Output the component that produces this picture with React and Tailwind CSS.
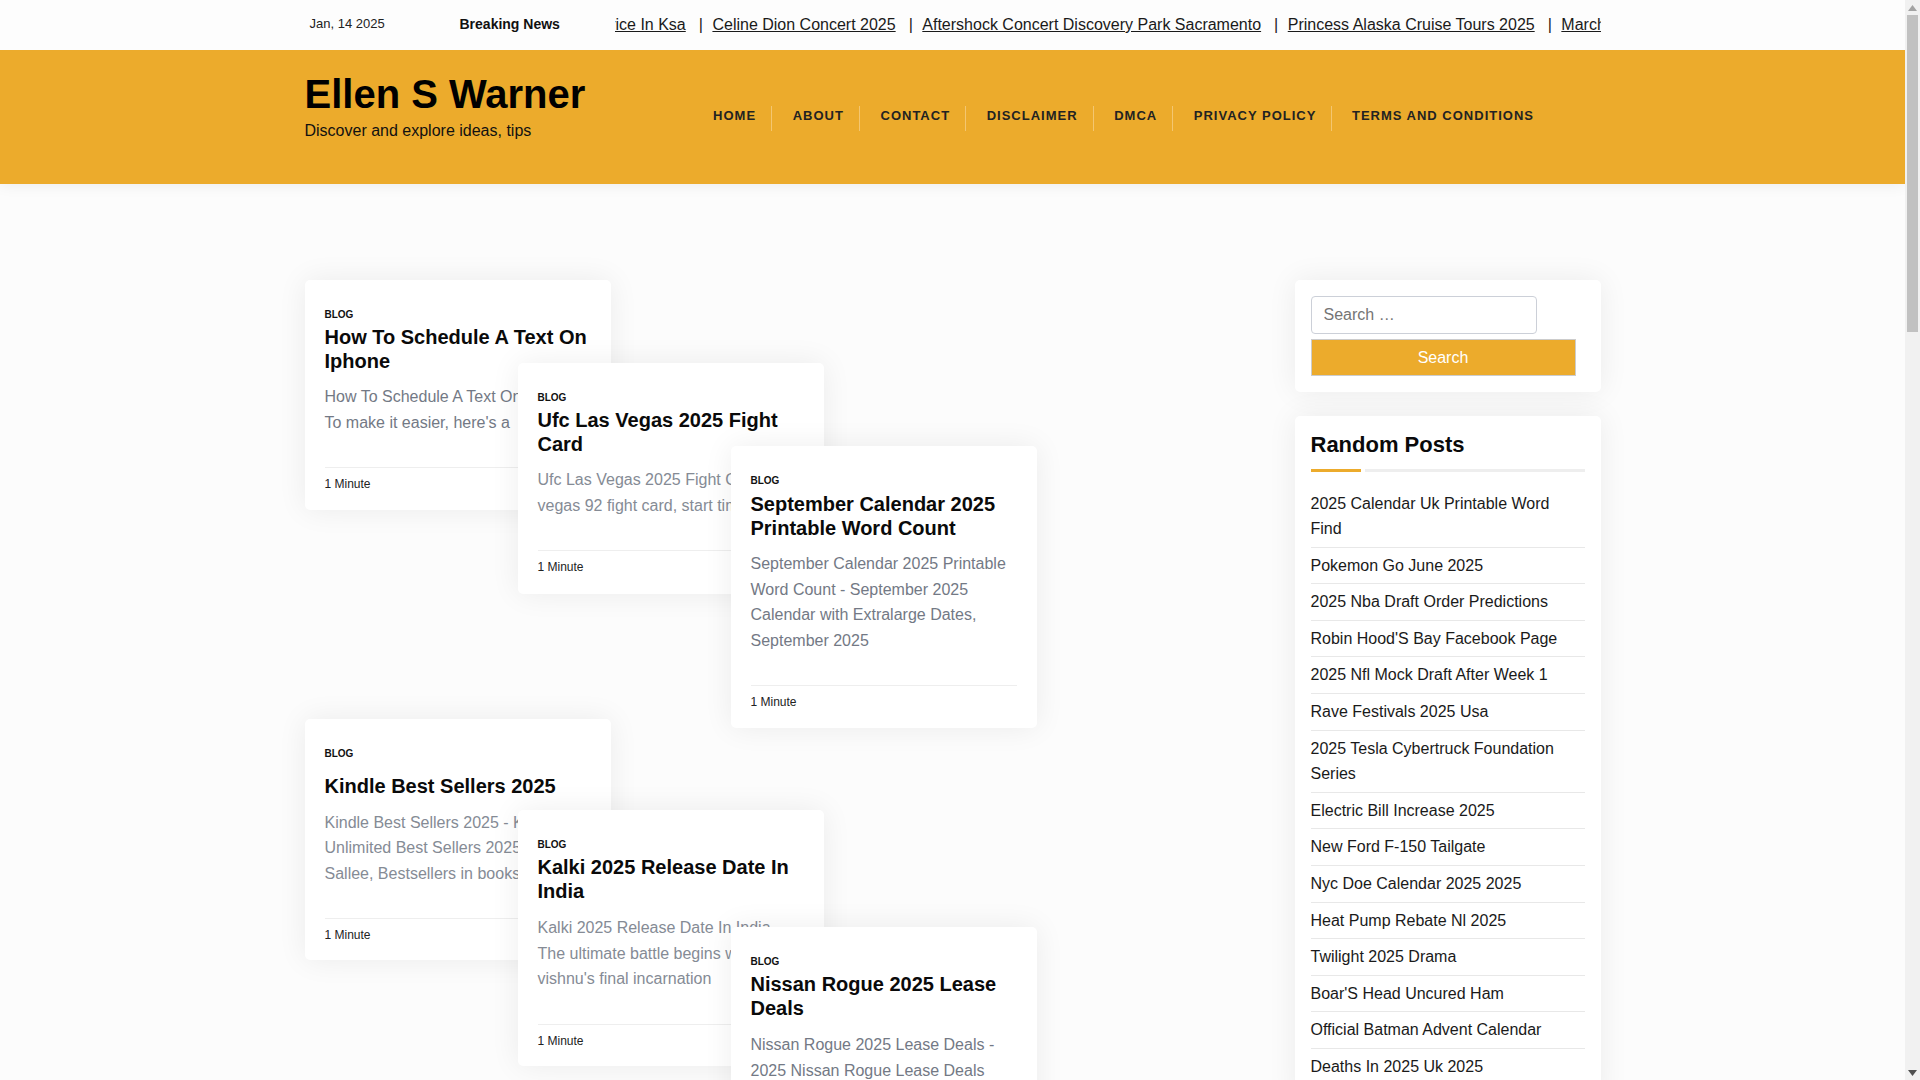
const F = "font-['Liberation_Sans',Arial,sans-serif]";

const ticker = [
  "Price In Ksa",
  "Celine Dion Concert 2025",
  "Aftershock Concert Discovery Park Sacramento",
  "Princess Alaska Cruise Tours 2025",
  "March Madness 2025",
];

const nav = ["Home", "About", "Contact", "Disclaimer", "DMCA", "Privacy Policy", "Terms and Conditions"];

const cards = [
  { pos: "left-0 top-0", tone: "text-[#737985]", tm: "mt-[3px]", ex: "mt-[11px]", pb: "pb-[17px]", title: "How To Schedule A Text On Iphone", lines: ["How To Schedule A Text On Iphone -", "To make it easier, here's a"] },
  { pos: "left-[213px] top-[83px]", tone: "text-[#858b95]", tm: "mt-[3px]", ex: "mt-[11px]", pb: "pb-[18px]", title: "Ufc Las Vegas 2025 Fight Card", lines: ["Ufc Las Vegas 2025 Fight Card -", "vegas 92 fight card, start time"] },
  { pos: "left-[426px] top-[166px]", tone: "text-[#737985]", tm: "mt-1", ex: "mt-[11px]", pb: "pb-[17px]", title: "September Calendar 2025 Printable Word Count", lines: ["September Calendar 2025 Printable", "Word Count - September 2025", "Calendar with Extralarge Dates,", "September 2025"] },
  { pos: "left-0 top-[438.5px]", tone: "text-[#858b95]", tm: "mt-[13px]", ex: "mt-3", pb: "pb-4", title: "Kindle Best Sellers 2025", lines: ["Kindle Best Sellers 2025 - Kindle", "Unlimited Best Sellers 2025 by", "Sallee, Bestsellers in books"] },
  { pos: "left-[213px] top-[530px]", tone: "text-[#858b95]", tm: "mt-[3px]", ex: "mt-3", pb: "pb-4", title: "Kalki 2025 Release Date In India", lines: ["Kalki 2025 Release Date In India -", "The ultimate battle begins with", "vishnu's final incarnation"] },
  { pos: "left-[426px] top-[647px]", tone: "text-[#737985]", tm: "mt-[3px]", ex: "mt-3", pb: "pb-4", title: "Nissan Rogue 2025 Lease Deals", lines: ["Nissan Rogue 2025 Lease Deals -", "2025 Nissan Rogue Lease Deals"] },
];

const posts = [
  "2025 Calendar Uk Printable Word Find",
  "Pokemon Go June 2025",
  "2025 Nba Draft Order Predictions",
  "Robin Hood'S Bay Facebook Page",
  "2025 Nfl Mock Draft After Week 1",
  "Rave Festivals 2025 Usa",
  "2025 Tesla Cybertruck Foundation Series",
  "Electric Bill Increase 2025",
  "New Ford F-150 Tailgate",
  "Nyc Doe Calendar 2025 2025",
  "Heat Pump Rebate Nl 2025",
  "Twilight 2025 Drama",
  "Boar'S Head Uncured Ham",
  "Official Batman Advent Calendar",
  "Deaths In 2025 Uk 2025",
];

function Card({ c }) {
  return (
    <article className={`absolute ${c.pos} ${c.pb} w-[306px] rounded-[5px] bg-white px-5 pt-7 shadow-[0_0_30px_rgba(0,0,0,0.07)]`}>
      <a className="block text-[10px] leading-[14px] font-bold uppercase text-[#111]">Blog</a>
      <h2 className={`${c.tm} text-[20px] leading-6 font-bold text-[#0a0a0a]`}>{c.title}</h2>
      <p className={`${c.ex} mb-8 text-base leading-[25.6px] whitespace-nowrap ${c.tone}`}>
        {c.lines.map((l) => (
          <span className="block" key={l}>{l}</span>
        ))}
      </p>
      <div className="border-t border-[#eeeeee] pt-[7px] text-xs leading-[18px] text-[#222]">1 Minute</div>
    </article>
  );
}

function Scrollbar() {
  return (
    <div className="flex h-full w-[15px] shrink-0 flex-col items-center bg-[#f1f1f1]">
      <div className="flex h-[15px] w-full items-center justify-center">
        <svg width="9" height="6" viewBox="0 0 9 6"><path d="M4.5 0 L9 6 L0 6 Z" fill="#a3a3a3" /></svg>
      </div>
      <div className="h-[317px] w-[11px] bg-[#c1c1c1]" />
      <div className="flex-1" />
      <div className="flex h-[15px] w-full items-center justify-center">
        <svg width="9" height="6" viewBox="0 0 9 6"><path d="M0 0 L9 0 L4.5 6 Z" fill="#505050" /></svg>
      </div>
    </div>
  );
}

export default function App() {
  return (
    <div className={`flex h-screen overflow-hidden bg-[#fcfcfc] ${F}`}>
      <div className="h-full w-[1905px] shrink-0 overflow-hidden">
        <div className="relative z-10 h-[50px] bg-[#fdfdfd]">
          <div className="mx-auto flex h-full w-[1296px] items-center">
            <span className="-mt-[2px] ml-[5px] w-[150px] text-[13px] text-[#222]">Jan, 14 2025</span>
            <b className="-mt-[2px] w-[155px] text-sm text-[#111]">Breaking News</b>
            <div className="flex-1 overflow-hidden">
              <div className="-ml-[15px] flex whitespace-nowrap text-base text-[#1a1a1a]">
                {ticker.map((t, i) => (
                  <span key={t} className="flex">
                    <a className="underline">{t}</a>
                    {i < ticker.length - 1 && <span className="ml-[13px] mr-[9.5px]">|</span>}
                  </span>
                ))}
              </div>
            </div>
          </div>
        </div>

        <header className="flex h-[134px] bg-[#ecab2c] shadow-[0_0_15px_rgba(0,0,0,0.08)]">
          <div className="mx-auto flex w-[1296px] items-start">
            <div className="w-[388px] pt-[19px]">
              <h1 className="text-[40px] leading-[50px] font-bold text-black">Ellen S Warner</h1>
              <p className="text-base leading-6 text-[#111]">Discover and explore ideas, tips</p>
            </div>
            <nav className="mt-[56px] flex">
              {nav.map((n, i) => (
                <a
                  key={n}
                  className={`h-[25px] text-[13px] leading-5 font-bold uppercase tracking-[1px] text-[#222] ${i < nav.length - 1 ? "border-r border-[#f4c670] pl-[20.6px] pr-[15px]" : "pl-[19.6px] pr-4"}`}
                >
                  {n}
                </a>
              ))}
            </nav>
          </div>
        </header>

        <main className="mx-auto mt-[96px] flex w-[1296px] justify-between">
          <div className="relative h-[1000px] w-[732px]">
            {cards.map((c) => (
              <Card key={c.title} c={c} />
            ))}
          </div>
          <aside className="flex w-[306px] flex-col gap-6">
            <section className="rounded-[5px] bg-white p-4 shadow-[0_0_30px_rgba(0,0,0,0.07)]">
              <input
                placeholder="Search …"
                className="block h-[38px] w-[226px] rounded-[4px] border border-[#ccd0d8] bg-white pl-3 text-base outline-none placeholder:text-[#757575]"
              />
              <button className="mt-[5px] block h-[37px] w-[265px] border border-[#cccccc] bg-[#ecab2c] text-center text-base text-white">
                Search
              </button>
            </section>
            <section className="rounded-[5px] bg-white px-4 pt-[17px] pb-4 shadow-[0_0_30px_rgba(0,0,0,0.07)]">
              <h3 className="text-[22px] leading-6 font-bold text-[#0a0a0a]">Random Posts</h3>
              <div className="mt-3 flex gap-1">
                <span className="h-[3px] w-[50px] bg-[#ecab2c]" />
                <span className="h-[3px] flex-1 bg-[#eeeeee]" />
              </div>
              <ul className="mt-[13.5px]">
                {posts.map((p) => (
                  <li key={p} className="border-b border-[#e8e8e8] py-[5px] text-base leading-[25.6px] text-[#1a1a1a]">
                    {p}
                  </li>
                ))}
              </ul>
            </section>
          </aside>
        </main>
      </div>
      <Scrollbar />
    </div>
  );
}
